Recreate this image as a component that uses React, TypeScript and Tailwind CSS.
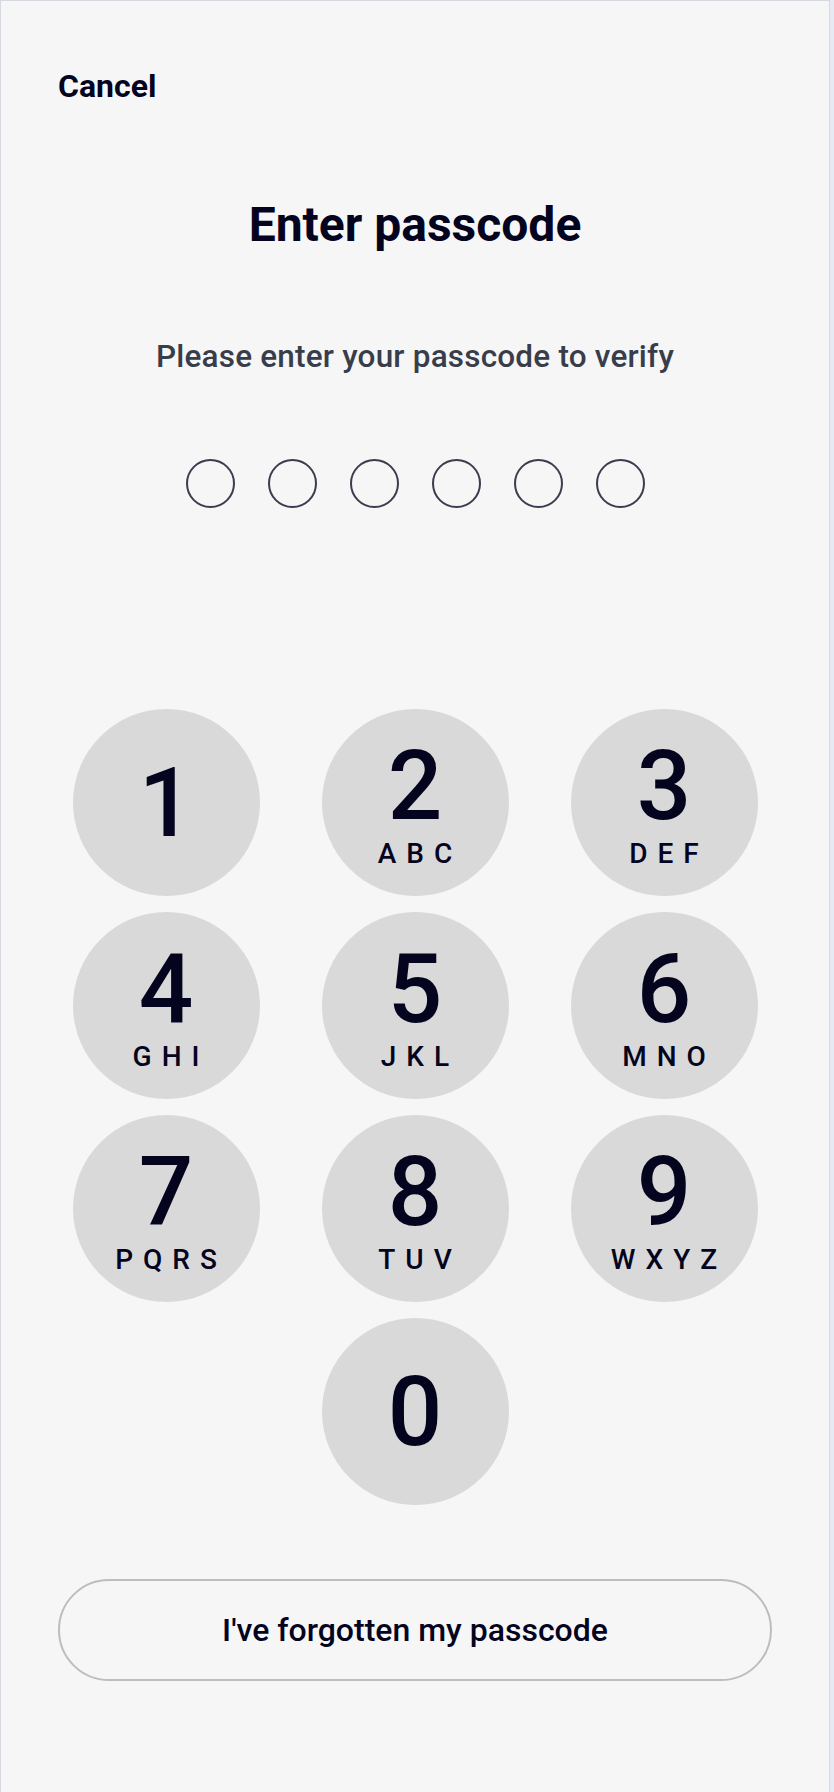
const keys: { digit: string; letters?: string }[] = [
  { digit: "1" },
  { digit: "2", letters: "ABC" },
  { digit: "3", letters: "DEF" },
  { digit: "4", letters: "GHI" },
  { digit: "5", letters: "JKL" },
  { digit: "6", letters: "MNO" },
  { digit: "7", letters: "PQRS" },
  { digit: "8", letters: "TUV" },
  { digit: "9", letters: "WXYZ" },
];

function Key({ digit, letters }: { digit: string; letters?: string }) {
  return (
    <button
      type="button"
      className="flex h-[187px] w-[187px] flex-col items-center justify-center rounded-full bg-[#d9d9d9] text-[#05041f]"
    >
      <span className="text-[96px] font-medium leading-none">{digit}</span>
      {letters && (
        <span className="mt-[6px] pl-[10px] text-[28px] font-medium leading-none tracking-[10px]">
          {letters}
        </span>
      )}
    </button>
  );
}

export default function App() {
  const pin = [0, 1, 2, 3, 4, 5];

  return (
    <div
      className="min-h-screen bg-[#e6eaf2]"
      style={{ fontFamily: "Roboto, 'Noto Sans', sans-serif" }}
    >
      <div className="flex min-h-[1792px] w-[830px] flex-col border-x border-t border-[#d5d8de] bg-[#f6f6f6] px-[57px] text-[#05041f]">
        <div className="pt-[65px]">
          <button type="button" className="text-[32px] font-bold leading-[40px]">
            Cancel
          </button>
        </div>

        <h1 className="mt-[91px] text-center text-[48px] font-bold leading-[56px]">
          Enter passcode
        </h1>

        <p className="mt-[86px] text-center text-[31.5px] font-medium leading-[36px] tracking-[0.2px] text-[#383d4b]">
          Please enter your passcode to verify
        </p>

        <div className="mt-[84px] flex justify-center gap-[33px]">
          {pin.map((i) => (
            <span
              key={i}
              className="h-[49px] w-[49px] rounded-full border-2 border-[#3a3d4d]"
            />
          ))}
        </div>

        <div className="mt-[201px] grid grid-cols-[187px_187px_187px] justify-center gap-x-[62px] gap-y-4">
          {keys.map((k) => (
            <Key key={k.digit} digit={k.digit} letters={k.letters} />
          ))}
          <div className="col-start-2">
            <Key digit="0" />
          </div>
        </div>

        <button
          type="button"
          className="mt-[74px] h-[102px] w-full rounded-full border-2 border-[#bdbdbd] text-[32px] font-medium"
        >
          I've forgotten my passcode
        </button>
      </div>
    </div>
  );
}
